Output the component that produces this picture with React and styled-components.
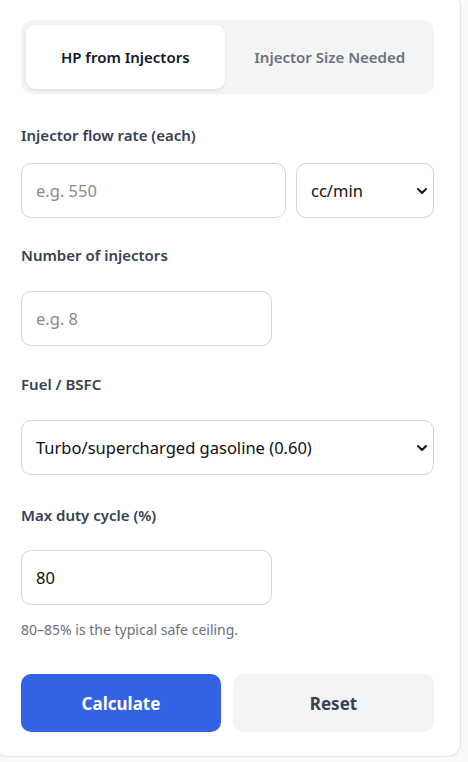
import React from "react";
import styled, { createGlobalStyle } from "styled-components";

const Global = createGlobalStyle`
  html, body { margin: 0; padding: 0; background: #fafafa; }
  body { font-family: "Noto Sans", "Open Sans", sans-serif; overflow: hidden; }
  * { box-sizing: border-box; }
`;

const Card = styled.div`
  margin: -8px 0 0 -6px;
  width: 467px;
  background: #fff;
  border: 1px solid #e5e7eb;
  border-radius: 14px;
  box-shadow: 0 1px 3px rgba(0,0,0,0.06);
  padding: 27px 26px 24px 26px;
  display: flex;
  flex-direction: column;
`;

const Tabs = styled.div`
  display: grid;
  grid-template-columns: 1fr 1fr;
  gap: 6px;
  padding: 5px;
  background: #f3f4f6;
  border-radius: 12px;
  height: 74px;
`;

const Tab = styled.button`
  border: none;
  border-radius: 9px;
  background: ${p => (p.$active ? "#fff" : "transparent")};
  box-shadow: ${p => (p.$active ? "0 1px 3px rgba(0,0,0,0.1)" : "none")};
  color: ${p => (p.$active ? "#111827" : "#6b7280")};
  font-family: "Noto Sans", sans-serif;
  font-weight: 600;
  font-size: 15px;
  cursor: pointer;
`;

const Field = styled.div`
  display: flex;
  flex-direction: column;
  margin-top: ${p => p.$mt || 0}px;
`;

const Label = styled.label`
  font-size: 15px;
  font-weight: 600;
  color: #374151;
  line-height: 20px;
  margin-bottom: ${p => p.$mb || 26}px;
`;

const Row = styled.div`
  display: flex;
  gap: 10px;
`;

const Input = styled.input`
  height: 55px;
  width: ${p => p.$w || "100%"};
  flex: ${p => (p.$grow ? 1 : "none")};
  border: 1px solid #d1d5db;
  border-radius: 10px;
  padding: 0 14px;
  font-family: "Noto Sans", sans-serif;
  font-size: 16.5px;
  color: #111;
  background: #fff;
  outline: none;
  &::placeholder { color: #8a8a8a; }
`;

const SelectWrap = styled.div`
  position: relative;
  width: ${p => p.$w || "100%"};
  flex: none;
`;

const Select = styled.select`
  appearance: none;
  width: 100%;
  height: 55px;
  border: 1px solid #d1d5db;
  border-radius: 10px;
  padding: 0 14px;
  font-family: "Noto Sans", sans-serif;
  font-size: 16.5px;
  color: #111;
  background: #fff;
  outline: none;
`;

const Chevron = styled.svg`
  position: absolute;
  right: 5px;
  top: 50%;
  transform: translateY(-50%);
  pointer-events: none;
`;

const Hint = styled.div`
  font-size: 14px;
  line-height: 20px;
  color: #6b7280;
  margin-top: 15px;
`;

const Buttons = styled.div`
  display: grid;
  grid-template-columns: 200px 1fr;
  gap: 12px;
  margin-top: 34px;
`;

const Button = styled.button`
  height: 58px;
  border: none;
  border-radius: 10px;
  font-family: "Noto Sans", sans-serif;
  font-weight: 700;
  font-size: 17px;
  background: ${p => (p.$primary ? "#3263e4" : "#f3f4f6")};
  color: ${p => (p.$primary ? "#fff" : "#374151")};
  cursor: pointer;
`;

const Arrow = () => (
  <Chevron width="14" height="14" viewBox="0 0 14 14">
    <path d="M3 5 L7 9 L11 5" fill="none" stroke="#111" strokeWidth="2" strokeLinecap="round" strokeLinejoin="round" />
  </Chevron>
);

export default function App() {
  return (
    <>
      <Global />
      <Card>
        <Tabs>
          <Tab $active>HP from Injectors</Tab>
          <Tab>Injector Size Needed</Tab>
        </Tabs>

        <Field $mt={31}>
          <Label $mb={18}>Injector flow rate (each)</Label>
          <Row>
            <Input $grow placeholder="e.g. 550" />
            <SelectWrap $w="138px">
              <Select defaultValue="cc">
                <option value="cc">cc/min</option>
                <option value="lb">lb/hr</option>
              </Select>
              <Arrow />
            </SelectWrap>
          </Row>
        </Field>

        <Field $mt={27}>
          <Label $mb={26}>Number of injectors</Label>
          <Input $w="251px" placeholder="e.g. 8" />
        </Field>

        <Field $mt={28}>
          <Label>Fuel / BSFC</Label>
          <SelectWrap>
            <Select defaultValue="turbo">
              <option value="na">Naturally aspirated gasoline (0.50)</option>
              <option value="turbo">Turbo/supercharged gasoline (0.60)</option>
            </Select>
            <Arrow />
          </SelectWrap>
        </Field>

        <Field $mt={30}>
          <Label $mb={25}>Max duty cycle (%)</Label>
          <Input $w="251px" defaultValue="80" />
          <Hint>80–85% is the typical safe ceiling.</Hint>
        </Field>

        <Buttons>
          <Button $primary>Calculate</Button>
          <Button>Reset</Button>
        </Buttons>
      </Card>
    </>
  );
}
